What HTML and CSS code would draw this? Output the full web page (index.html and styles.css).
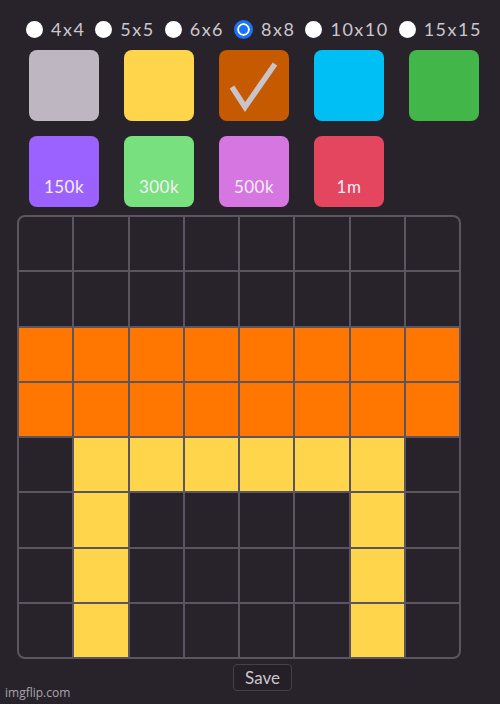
FILE: index.html
```html
<!DOCTYPE html>
<html lang="en">
<head>
    <meta charset="UTF-8">
    <title>Pixel Grid</title>
    <link rel="stylesheet" href="styles.css">
</head>
<body>
    <div class="page">
        <div class="sizes">
            <label class="size"><input type="radio" name="size"> 4x4</label>
            <label class="size"><input type="radio" name="size"> 5x5</label>
            <label class="size"><input type="radio" name="size"> 6x6</label>
            <label class="size"><input type="radio" name="size" checked> 8x8</label>
            <label class="size"><input type="radio" name="size"> 10x10</label>
            <label class="size"><input type="radio" name="size"> 15x15</label>
        </div>

        <div class="palette">
            <div class="swatch gray"></div>
            <div class="swatch yellow"></div>
            <div class="swatch orange selected">
                <svg width="70" height="71" viewBox="0 0 70 71">
                    <path d="M13 37 L26 57 L56 14" fill="none" stroke="#c9c4c9" stroke-width="5.5"/>
                </svg>
            </div>
            <div class="swatch cyan"></div>
            <div class="swatch green"></div>
            <div class="swatch purple"><span>150k</span></div>
            <div class="swatch mint"><span>300k</span></div>
            <div class="swatch pink"><span>500k</span></div>
            <div class="swatch red"><span>1m</span></div>
        </div>

        <div class="board" id="board"></div>

        <button class="save">Save</button>
        <div class="watermark">imgflip.com</div>
    </div>
    <script>
        const rows = [
            '........',
            '........',
            'oooooooo',
            'oooooooo',
            '.yyyyyy.',
            '.y....y.',
            '.y....y.',
            '.y....y.'
        ];
        const board = document.getElementById('board');
        rows.forEach(row => {
            row.split('').forEach(c => {
                const cell = document.createElement('div');
                cell.className = 'cell';
                if (c === 'o') cell.classList.add('orange');
                if (c === 'y') cell.classList.add('yellow');
                board.appendChild(cell);
            });
        });
    </script>
</body>
</html>
```

FILE: styles.css
```css
body {
    margin: 0;
    background-color: #28232a;
    font-family: Lato, "Open Sans", sans-serif;
    color: #cbc6ce;
}

.page {
    width: 500px;
    height: 704px;
    position: relative;
}

.sizes {
    display: flex;
    align-items: center;
    padding: 19px 0 0 26px;
    height: 20px;
}

.size {
    display: flex;
    align-items: center;
    font-size: 18px;
    letter-spacing: 1.5px;
    margin-right: 10px;
}

.size input {
    appearance: none;
    -webkit-appearance: none;
    width: 17px;
    height: 17px;
    margin: 0 8px 0 0;
    border-radius: 50%;
    background: #fff;
}

.size input:checked {
    background: #1a73ff;
    border: 3px solid #1a73ff;
    box-shadow: inset 0 0 0 2px #fff;
    width: 19px;
    height: 19px;
}

.palette {
    display: grid;
    grid-template-columns: repeat(5, 70px);
    column-gap: 25px;
    row-gap: 15px;
    padding: 11px 0 0 29px;
}

.swatch {
    height: 71px;
    border-radius: 8px;
    display: flex;
    align-items: flex-end;
    justify-content: center;
    color: #f4eef6;
    font-size: 17px;
    letter-spacing: 0.5px;
}

.swatch span {
    padding-bottom: 10px;
}

.swatch.selected {
    align-items: stretch;
}

.gray { background: #beb6c1; }
.yellow { background: #ffd54c; }
.orange { background: #c65a00; }
.cyan { background: #00bff4; }
.green { background: #42b649; }
.purple { background: #9c62ff; }
.mint { background: #78e07f; }
.pink { background: #d676e1; }
.red { background: #e5465f; }

.board {
    margin: 8px 0 0 17px;
    width: 440px;
    height: 440px;
    display: grid;
    grid-template-columns: repeat(8, 1fr);
    grid-template-rows: repeat(8, 1fr);
    gap: 2px;
    background: #5b5562;
    border: 2px solid #5b5562;
    border-radius: 8px;
    overflow: hidden;
}

.cell {
    background: #28232a;
}

.cell.orange { background: #ff7700; }
.cell.yellow { background: #ffd54c; }

.save {
    display: block;
    margin: 5px 0 0 233px;
    width: 59px;
    height: 27px;
    padding: 0;
    background: #252027;
    border: 1px solid #45404a;
    border-radius: 4px;
    color: #cbc6ce;
    font-family: Lato, sans-serif;
    font-size: 17px;
}

.watermark {
    position: absolute;
    left: 5px;
    bottom: 3px;
    font-family: "Open Sans", sans-serif;
    font-size: 12px;
    color: #a9a4ab;
}
```
